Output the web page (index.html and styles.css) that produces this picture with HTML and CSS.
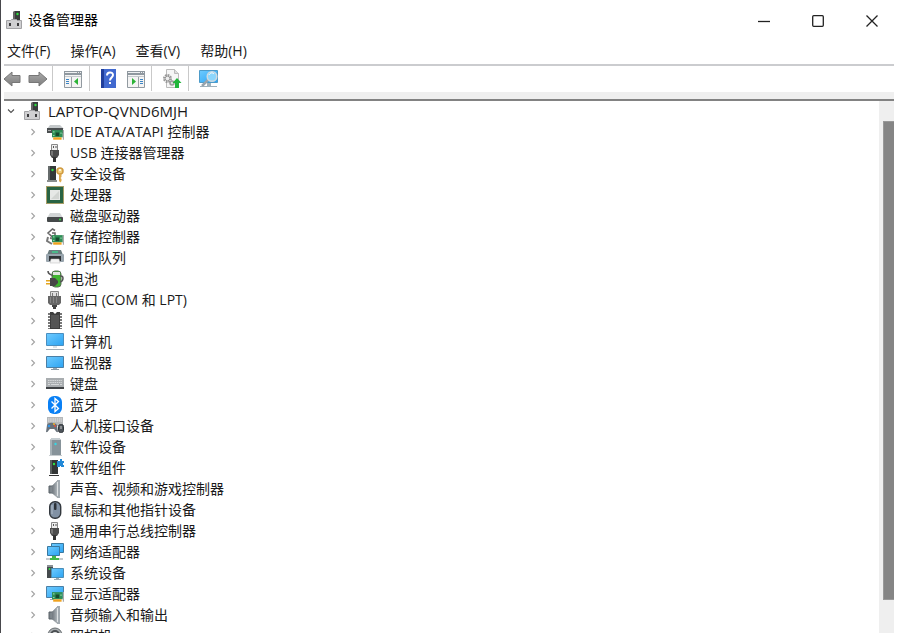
FILE: index.html
```html
<!DOCTYPE html>
<html lang="zh-CN">

<head>
  <meta charset="UTF-8">
  <meta name="viewport" content="width=device-width, initial-scale=1.0">
  <title>设备管理器</title>
  <link rel="stylesheet" href="styles.css">
</head>

<body>

  <!-- Shared icons -->
  <svg class="sprite" aria-hidden="true">
    <defs>
      <linearGradient id="screen" x1="0" y1="0" x2="1" y2="1">
        <stop offset="0" stop-color="#6fcbff" />
        <stop offset="1" stop-color="#2ba3f2" />
      </linearGradient>
      <linearGradient id="metal" x1="0" y1="0" x2="1" y2="0">
        <stop offset="0" stop-color="#6d747a" />
        <stop offset="1" stop-color="#b9c0c5" />
      </linearGradient>
      <linearGradient id="arrow" x1="0" y1="0" x2="0" y2="1">
        <stop offset="0" stop-color="#aaa" />
        <stop offset="1" stop-color="#7d7d7d" />
      </linearGradient>
    </defs>
    <symbol id="computer-box" viewBox="0 0 18 18">
      <path d="M7 1l2-1h5v10H7z" fill="#3a3d3c" />
      <path d="M7 1l2-1v10H7z" fill="#666" />
      <circle cx="11.500" cy="3" r="1.200" fill="#2ddf3e" />
      <path d="M.5 9.500h4l1-1h5l1 1h4v8H.5z" fill="#d0d0d2" stroke="#a2a2a5" />
      <path d="M3 12h2v3H3zM11 12h2v3h-2z" fill="#3b3b3d" />
    </symbol>
    <symbol id="usb" viewBox="0 0 18 18">
      <path d="M5.500.5h6v6h-6z" fill="#eee" stroke="#888" />
      <path d="M7 2h1v2H7zM9.500 2h1v2h-1z" fill="#555" />
      <path d="M4 6h9v5l-2 3H6l-2-3z" fill="#4c4c4c" />
      <path d="M5 7h2v5l-2-1z" fill="#777" />
      <path d="M7 13h3v5H7z" fill="#333" />
    </symbol>
    <symbol id="speaker" viewBox="0 0 18 18">
      <path d="M3 6h4v7H3z" fill="#7d858b" stroke="#596066" />
      <path d="M6 6l6-6v18l-6-5z" fill="url(#metal)" stroke="#878f95" stroke-width=".5" />
      <path d="M12 0h2v18h-2z" fill="#a3abb1" />
      <path d="M11 2h1v14h-1z" fill="#dfe3e5" />
    </symbol>
    <symbol id="monitor" viewBox="0 0 18 18">
      <path d="M.5 2.500h17v11H.5z" fill="url(#screen)" stroke="#4a7fa5" />
      <path d="M7 14h4v2H7z" fill="#9ba9b4" />
      <path d="M5 15h8v1H5z" fill="#8b99a4" />
    </symbol>
    <symbol id="card" viewBox="0 0 10 9">
      <path d="M0 0h9v6H0z" fill="#2f8f57" />
      <path d="M3 2h3v3H3z" fill="#174b2f" />
      <path d="M1 1h1v1H1zM7 2h1v1H7zM1 4h1v1H1z" fill="#a5dfb7" />
      <path d="M1 6h7v2H1z" fill="#f0a21e" />
      <path d="M9 0h1v8H9z" fill="#aaa" />
    </symbol>
    <symbol id="chevron" viewBox="0 0 8 8">
      <path d="M2.500 1l3 3-3 3" fill="none" stroke="#a2a2a2" stroke-width="1.100" />
    </symbol>
  </svg>

  <div class="window">

    <!-- Title bar -->
    <header class="title-bar">
      <svg class="icon"><use href="#computer-box" /></svg>
      <h1>设备管理器</h1>
      <div class="window-buttons">
        <button type="button" aria-label="最小化"><svg viewBox="0 0 12 12"><path d="M0 6.500h12" /></svg></button>
        <button type="button" aria-label="最大化"><svg viewBox="0 0 12 12"><rect x=".7" y=".7" width="10.600" height="10.600" rx="1" /></svg></button>
        <button type="button" aria-label="关闭"><svg viewBox="0 0 12 12"><path d="M.5.5l11 11M11.500.5l-11 11" /></svg></button>
      </div>
    </header>

    <!-- Menu -->
    <nav class="menu">
      <button type="button">文件(F)</button>
      <button type="button">操作(A)</button>
      <button type="button">查看(V)</button>
      <button type="button">帮助(H)</button>
    </nav>

    <!-- Toolbar -->
    <div class="toolbar">
      <div class="group">
        <button type="button" aria-label="后退"><svg viewBox="0 0 20 20"><path d="M0 10l8-7v3.500h8v7H8V17z" fill="url(#arrow)" stroke="#777" /></svg></button>
        <button type="button" aria-label="前进"><svg viewBox="0 0 20 20"><path d="M19 10l-8-7v3.500H1v7h10V17z" fill="url(#arrow)" stroke="#777" /></svg></button>
      </div>
      <div class="group">
        <button type="button" aria-label="显示控制台树">
          <svg viewBox="0 0 20 20">
            <path d="M1.500 2.500h17v16h-17z" fill="#f4f4f4" stroke="#929aa0" />
            <path d="M1 2h18v4H1z" fill="#8f989f" />
            <path d="M2 3h12v1H2zM15 3h1v1h-1zM17 3h1v1h-1z" fill="#eef0f1" />
            <path d="M2 7h16v1H2z" fill="#c5cacd" />
            <path d="M8 8h1v10H8z" fill="#9aa1a6" />
            <path d="M3 10h3v1H3zM3 12h3v1H3zM3 14h3v1H3z" fill="#3b85c5" />
            <path d="M15 9v7l-4-3.500z" fill="#2bb336" />
          </svg>
        </button>
      </div>
      <div class="group">
        <button type="button" aria-label="帮助">
          <svg viewBox="0 0 20 20">
            <path d="M1 0h15v19H1z" fill="#4169cf" />
            <path d="M1 0h3v19H1z" fill="#203e9b" />
            <path d="M7 6.500c0-4 6-4 6-.5 0 2.500-3 2.500-3 5.500" fill="none" stroke="#fff" stroke-width="2" />
            <path d="M9 13h2v2H9z" fill="#fff" />
          </svg>
        </button>
        <button type="button" aria-label="属性">
          <svg viewBox="0 0 20 20">
            <path d="M2.500 2.500h17v16h-17z" fill="#f4f4f4" stroke="#929aa0" />
            <path d="M2 2h18v4H2z" fill="#8f989f" />
            <path d="M3 3h12v1H3zM16 3h1v1h-1zM18 3h1v1h-1z" fill="#eef0f1" />
            <path d="M3 7h16v1H3z" fill="#c5cacd" />
            <path d="M13 8h1v10h-1z" fill="#9aa1a6" />
            <path d="M15 10h3v1h-3zM15 12h3v1h-3zM15 14h3v1h-3z" fill="#3b85c5" />
            <path d="M7 9v7l4-3.500z" fill="#2bb336" />
          </svg>
        </button>
      </div>
      <div class="group">
        <button type="button" aria-label="更新驱动程序">
          <svg viewBox="0 0 20 20">
            <path d="M4.500.5h8l4 4v14h-12z" fill="#f6f6f6" stroke="#bbb" />
            <path d="M12.500.5v4h4" fill="#ddd" stroke="#bbb" />
            <circle cx="5.500" cy="9.500" r="3.500" fill="none" stroke="#999" stroke-width="2" stroke-dasharray="1.800 .9" />
            <circle cx="5.500" cy="9.500" r="2.300" fill="#eee" stroke="#999" />
            <circle cx="10" cy="14" r="2" fill="#ddd" stroke="#999" stroke-width="1.500" />
            <path d="M15 9l4.500 5H17v5h-4v-5h-2.500z" fill="#22b53b" />
          </svg>
        </button>
      </div>
      <div class="group">
        <button type="button" aria-label="扫描检测硬件改动">
          <svg viewBox="0 0 20 20">
            <path d="M.5 1.500h18v12H.5z" fill="url(#screen)" stroke="#4d9bc9" />
            <path d="M8 14h4v3H8zM1 17h17v1H1z" fill="#9fb1bc" />
            <path d="M9.500 10.500L3 17" stroke="#98a4ad" stroke-width="2.500" />
            <circle cx="13" cy="7.500" r="4.800" fill="#8cd6fc" stroke="#cfdae1" stroke-width="1.500" />
            <path d="M10 6c1-2 3-3 5-1" fill="none" stroke="#fff" />
          </svg>
        </button>
      </div>
    </div>

    <!-- Device tree -->
    <main class="content">
      <ul class="tree">
        <li>
          <div class="row root">
            <button type="button" class="expander open" aria-label="折叠"><svg><use href="#chevron" /></svg></button>
            <svg class="icon"><use href="#computer-box" /></svg>
            <span>LAPTOP-QVND6MJH</span>
          </div>
          <ul class="devices">
            <li class="row">
              <button type="button" class="expander" aria-label="展开"><svg><use href="#chevron" /></svg></button>
              <svg class="icon" viewBox="0 0 18 18">
                <path d="M4 2h10l4 4H1z" fill="#c4c8ca" />
                <path d="M1 5h16v5H1z" fill="#4a4e50" />
                <path d="M2 7h3v1H2z" fill="#aaa" />
                <use href="#card" x="6" y="7" width="12" height="11" />
              </svg>
              <span>IDE ATA/ATAPI 控制器</span>
            </li>
            <li class="row">
              <button type="button" class="expander" aria-label="展开"><svg><use href="#chevron" /></svg></button>
              <svg class="icon"><use href="#usb" /></svg>
              <span>USB 连接器管理器</span>
            </li>
            <li class="row">
              <button type="button" class="expander" aria-label="展开"><svg><use href="#chevron" /></svg></button>
              <svg class="icon" viewBox="0 0 18 18">
                <path d="M2 1h8v14H2z" fill="#353838" />
                <path d="M2 1h2v14H2z" fill="#666b6b" />
                <path d="M1 15h10v2H1z" fill="#8a8e8e" />
                <circle cx="6.500" cy="5" r="1.200" fill="#2fe043" />
                <circle cx="14" cy="6" r="3" fill="#f3cf79" stroke="#d09b42" stroke-width="1.500" />
                <circle cx="14" cy="5" r="1" fill="#fff" />
                <path d="M13 9h2.500v3l-1 1 1 1v2l-1.200 1.500L13 16z" fill="#dfa94c" />
              </svg>
              <span>安全设备</span>
            </li>
            <li class="row">
              <button type="button" class="expander" aria-label="展开"><svg><use href="#chevron" /></svg></button>
              <svg class="icon" viewBox="0 0 18 18">
                <path d="M0 0h18v18H0z" fill="#a59d66" />
                <path d="M1 1h16v16H1z" fill="#286343" />
                <path d="M4 4h10v10H4z" fill="#e6e8e6" />
                <path d="M5 13l8-8v8z" fill="#d2d5d2" />
              </svg>
              <span>处理器</span>
            </li>
            <li class="row">
              <button type="button" class="expander" aria-label="展开"><svg><use href="#chevron" /></svg></button>
              <svg class="icon" viewBox="0 0 18 18">
                <path d="M4 6h10l3 5H1z" fill="#d2d5d6" />
                <rect x="1" y="10" width="16" height="5" rx="1" fill="#45494a" />
                <circle cx="14" cy="12.500" r="1" fill="#2fe043" />
              </svg>
              <span>磁盘驱动器</span>
            </li>
            <li class="row">
              <button type="button" class="expander" aria-label="展开"><svg><use href="#chevron" /></svg></button>
              <svg class="icon" viewBox="0 0 18 18">
                <path d="M9 2.500L6.500 1 2 5l4.500 4L9 7.500V5H6" fill="none" stroke="#666" stroke-width="1.500" />
                <path d="M2 9l-1 4 5 3M4 10l5 1" fill="none" stroke="#777" stroke-width="2" />
                <use href="#card" x="6" y="7" width="12" height="11" />
              </svg>
              <span>存储控制器</span>
            </li>
            <li class="row">
              <button type="button" class="expander" aria-label="展开"><svg><use href="#chevron" /></svg></button>
              <svg class="icon" viewBox="0 0 18 18">
                <path d="M3 1h12l2 5H1z" fill="#6c7d80" />
                <path d="M6 2h6v2H6z" fill="#49b98a" />
                <rect y="5" width="18" height="8" rx="1" fill="#98a4ad" />
                <path d="M3 7h12v5H3z" fill="#2f3337" />
                <path d="M5 10h8l1 4H4z" fill="#f4f4f4" stroke="#bbb" stroke-width=".5" />
              </svg>
              <span>打印队列</span>
            </li>
            <li class="row">
              <button type="button" class="expander" aria-label="展开"><svg><use href="#chevron" /></svg></button>
              <svg class="icon" viewBox="0 0 18 18">
                <rect x="6" y="1" width="9" height="16" rx="3" fill="#3fb62f" stroke="#5b7158" />
                <path d="M7 2h7v3H7z" fill="#dfe6dd" />
                <path d="M2 1c0 4 3 3 5 5M14 6c4-1 4 5 0 6" fill="none" stroke="#555" stroke-width="1.500" />
                <path d="M0 10h5v1.500H0zM0 13h5v1.500H0z" fill="#e4a51f" />
                <path d="M4 8h5l3 3v2l-3 3H4z" fill="#464646" />
              </svg>
              <span>电池</span>
            </li>
            <li class="row">
              <button type="button" class="expander" aria-label="展开"><svg><use href="#chevron" /></svg></button>
              <svg class="icon" viewBox="0 0 18 18">
                <path d="M4.500.5h8v5h-8z" fill="#ddd" stroke="#888" />
                <path d="M6 2h1v3H6zM10 2h1v3h-1z" fill="#777" />
                <path d="M2 5h13v7l-2 2H4l-2-2z" fill="#666" />
                <path d="M4 6h1v6H4zM7 6h1v6H7zM10 6h1v6h-1z" fill="#858585" />
                <path d="M6 14h5v2H6zM7 16h3v2H7z" fill="#444" />
              </svg>
              <span>端口 (COM 和 LPT)</span>
            </li>
            <li class="row">
              <button type="button" class="expander" aria-label="展开"><svg><use href="#chevron" /></svg></button>
              <svg class="icon" viewBox="0 0 18 18">
                <path d="M3 1v16M15 1v16" stroke="#777" stroke-width="2" stroke-dasharray="2 1" />
                <path d="M4 0h3l2 2 2-2h3v17H4z" fill="#3e3e3e" />
                <path d="M5 3h8v13H5z" fill="#555" />
              </svg>
              <span>固件</span>
            </li>
            <li class="row">
              <button type="button" class="expander" aria-label="展开"><svg><use href="#chevron" /></svg></button>
              <svg class="icon" viewBox="0 0 18 18">
                <path d="M.5.5h17v12H.5z" fill="url(#screen)" stroke="#4a8fc0" />
                <path d="M0 16h18v1H0z" fill="#9fadb7" />
                <path d="M7 13h4v2H7z" fill="#dce3e7" />
              </svg>
              <span>计算机</span>
            </li>
            <li class="row">
              <button type="button" class="expander" aria-label="展开"><svg><use href="#chevron" /></svg></button>
              <svg class="icon"><use href="#monitor" /></svg>
              <span>监视器</span>
            </li>
            <li class="row">
              <button type="button" class="expander" aria-label="展开"><svg><use href="#chevron" /></svg></button>
              <svg class="icon" viewBox="0 0 18 18">
                <path d="M0 3h18v9H0z" fill="#a9adb0" />
                <path d="M2 5.500h14M2 7.500h14" stroke="#d5d8da" stroke-dasharray="1.500 .7" />
                <path d="M2 9.500h2M5 9.500h8M14 9.500h2" stroke="#d5d8da" />
                <path d="M0 12h18v2H0z" fill="#404346" />
              </svg>
              <span>键盘</span>
            </li>
            <li class="row">
              <button type="button" class="expander" aria-label="展开"><svg><use href="#chevron" /></svg></button>
              <svg class="icon" viewBox="0 0 18 18">
                <rect x="2" width="14" height="18" rx="6" fill="#0a80f5" />
                <path d="M5.500 5.500l7 7L9 15.500v-13l3.500 3-7 7" fill="none" stroke="#fff" stroke-width="1.300" />
              </svg>
              <span>蓝牙</span>
            </li>
            <li class="row">
              <button type="button" class="expander" aria-label="展开"><svg><use href="#chevron" /></svg></button>
              <svg class="icon" viewBox="0 0 18 18">
                <path d="M1 0h16v9H1z" fill="#b5b8ba" />
                <path d="M2 2h14M2 4h14" stroke="#e8e8e8" stroke-dasharray="1.500 .7" />
                <path d="M1 8c1-3 8-3 10 0l1 7c-2 1-3-3-4-3H4c-1 0-2 4-4 3z" fill="#68717a" />
                <circle cx="3" cy="9" r="1.300" fill="#3494e6" />
                <circle cx="8" cy="7" r="1" fill="#f0b32f" />
                <circle cx="9" cy="9" r="1" fill="#e44c3d" />
                <rect x="12.500" y="7.500" width="5" height="8" rx="2" fill="#4c5359" stroke="#30363b" />
                <path d="M15 9v3" stroke="#ccc" />
              </svg>
              <span>人机接口设备</span>
            </li>
            <li class="row">
              <button type="button" class="expander" aria-label="展开"><svg><use href="#chevron" /></svg></button>
              <svg class="icon" viewBox="0 0 18 18">
                <path d="M4 2l2-2h7l2 2v15H4z" fill="#87939a" />
                <path d="M4 2h11l-2-2H6z" fill="#c5cdd1" />
                <path d="M4 2h2v15H4z" fill="#a7b1b6" />
                <circle cx="9.500" cy="6" r="1.200" fill="#35d8e5" />
                <path d="M3 17h13v1H3z" fill="#c8cdd0" />
              </svg>
              <span>软件设备</span>
            </li>
            <li class="row">
              <button type="button" class="expander" aria-label="展开"><svg><use href="#chevron" /></svg></button>
              <svg class="icon" viewBox="0 0 18 18">
                <path d="M4 1h8v14H4z" fill="#333636" />
                <path d="M4 1h2v14H4z" fill="#5b6060" />
                <path d="M3 16h10v1H3z" fill="#333" />
                <circle cx="8" cy="5" r="1.200" fill="#2fe043" />
                <path d="M11 2h3V0h2v2h2v2h-1v2h1v2h-3V7h-1v1h-3z" fill="#2389d7" />
              </svg>
              <span>软件组件</span>
            </li>
            <li class="row">
              <button type="button" class="expander" aria-label="展开"><svg><use href="#chevron" /></svg></button>
              <svg class="icon"><use href="#speaker" /></svg>
              <span>声音、视频和游戏控制器</span>
            </li>
            <li class="row">
              <button type="button" class="expander" aria-label="展开"><svg><use href="#chevron" /></svg></button>
              <svg class="icon" viewBox="0 0 18 18">
                <rect x="3.700" y=".7" width="11" height="16.600" rx="5" fill="#8191a4" stroke="#33383e" stroke-width="1.400" />
                <path d="M6 4v9" stroke="#b1bdc9" />
                <rect x="8" y="2" width="2.500" height="7" rx="1" fill="#2d3238" />
              </svg>
              <span>鼠标和其他指针设备</span>
            </li>
            <li class="row">
              <button type="button" class="expander" aria-label="展开"><svg><use href="#chevron" /></svg></button>
              <svg class="icon"><use href="#usb" /></svg>
              <span>通用串行总线控制器</span>
            </li>
            <li class="row">
              <button type="button" class="expander" aria-label="展开"><svg><use href="#chevron" /></svg></button>
              <svg class="icon" viewBox="0 0 18 18">
                <path d="M5.500.5h12v9h-12z" fill="url(#screen)" stroke="#39789f" />
                <path d="M1.500 3.500h12v9h-12z" fill="url(#screen)" stroke="#39789f" />
                <path d="M6 13h4v2h3v2H4v-2h2z" fill="#43b84a" />
                <path d="M0 15h4v2H0zM13 15h4v2h-4z" fill="#c6cbce" />
              </svg>
              <span>网络适配器</span>
            </li>
            <li class="row">
              <button type="button" class="expander" aria-label="展开"><svg><use href="#chevron" /></svg></button>
              <svg class="icon" viewBox="0 0 18 18">
                <path d="M1 1h6v13H1z" fill="#454a4d" />
                <path d="M1 1h6v2H1z" fill="#8c9295" />
                <circle cx="3.500" cy="5" r="1" fill="#2fe043" />
                <path d="M5.500 4.500h12v9h-12z" fill="url(#screen)" stroke="#4b8eb7" />
                <path d="M10 14h3v1h2v1H8v-1h2z" fill="#9ba8b1" />
              </svg>
              <span>系统设备</span>
            </li>
            <li class="row">
              <button type="button" class="expander" aria-label="展开"><svg><use href="#chevron" /></svg></button>
              <svg class="icon" viewBox="0 0 18 18">
                <path d="M.5 1.500h17v11H.5z" fill="url(#screen)" stroke="#4a7fa5" />
                <path d="M4 14h4v1H4z" fill="#9ba9b4" />
                <use href="#card" x="6" y="7" width="12" height="11" />
              </svg>
              <span>显示适配器</span>
            </li>
            <li class="row">
              <button type="button" class="expander" aria-label="展开"><svg><use href="#chevron" /></svg></button>
              <svg class="icon"><use href="#speaker" /></svg>
              <span>音频输入和输出</span>
            </li>
            <li class="row">
              <button type="button" class="expander" aria-label="展开"><svg><use href="#chevron" /></svg></button>
              <svg class="icon" viewBox="0 0 18 18">
                <circle cx="9" cy="8" r="7" fill="#a8adb0" stroke="#6a6f72" />
                <circle cx="9" cy="8" r="4" fill="#e0e3e4" stroke="#4b4f52" stroke-width="2" />
                <circle cx="9" cy="8" r="2" fill="#333" />
                <path d="M4 16h10v2H4z" fill="#777" />
              </svg>
              <span>照相机</span>
            </li>
          </ul>
        </li>
      </ul>
      <div class="scrollbar">
        <div class="thumb"></div>
      </div>
    </main>

  </div>

</body>

</html>
```

FILE: styles.css
```css
* {
  box-sizing: border-box;
}

body {
  margin: 0;
  background-color: #fff;
  color: #1a1a1a;
  font-family: 'Open Sans', 'Noto Sans CJK SC', sans-serif;
  font-size: 14px;
  line-height: 20px;
}

button {
  display: flex;
  align-items: center;
  justify-content: center;
  padding: 0;
  border: none;
  background: none;
  color: inherit;
  font: inherit;
}

ul {
  list-style: none;
  margin: 0;
  padding: 0;
}

.sprite {
  position: absolute;
  width: 0;
  height: 0;
}

.window {
  display: flex;
  flex-direction: column;
  height: 100vh;
  padding-left: 3px;
  border-left: 1px solid #48484c;
  overflow: hidden;
}

.icon {
  flex: none;
  width: 18px;
  height: 18px;
}

/* Title bar */
.title-bar {
  display: flex;
  flex: none;
  align-items: center;
  height: 40px;
  padding-left: 2px;
  margin-right: 4px;
}

.title-bar h1 {
  margin: 0 0 0 4px;
  color: #000;
  font-size: 14px;
  font-weight: 400;
}

.window-buttons {
  display: flex;
  margin-left: auto;
}

.window-buttons button {
  width: 54px;
  height: 40px;
  padding-top: 2px;
}

.window-buttons svg {
  width: 12px;
  height: 12px;
  fill: none;
  stroke: #222;
  stroke-width: 1.3;
}

/* Menu */
.menu {
  display: flex;
  flex: none;
  gap: 20px;
  height: 24px;
  padding: 0 3px 2px;
}

/* Toolbar */
.toolbar {
  display: flex;
  flex: none;
  height: 37px;
  margin-right: 9px;
  padding-bottom: 8px;
  border-top: 2px solid #cbcccf;
  border-bottom: 2px solid #828282;
  background: linear-gradient(to top, #efefef 7px, #fff 7px);
}

.toolbar .group {
  display: flex;
  align-items: center;
  gap: 5px;
  padding: 0 6px 0 10px;
  border-right: 1px solid #c9c9c9;
}

.toolbar .group:first-child {
  gap: 4px;
  padding: 0 4px 0 0;
}

.toolbar .group:last-child {
  border-right: none;
}

.toolbar svg {
  width: 20px;
  height: 20px;
}

/* Device tree */
.content {
  display: flex;
  flex: 1;
  min-height: 0;
  margin-right: 9px;
}

.tree {
  flex: 1;
  overflow: hidden;
}

.row {
  display: flex;
  align-items: center;
  height: 21px;
  white-space: nowrap;
}

.row .icon {
  margin: 0 6px 0 7px;
}

.row.root {
  height: 20px;
  font-size: 15px;
}

.devices {
  padding-left: 22px;
}

.expander {
  width: 13px;
  height: 20px;
}

.expander svg {
  width: 8px;
  height: 8px;
}

.expander.open svg {
  transform: rotate(90deg);
}

.expander.open use {
  filter: brightness(0.5);
}

.scrollbar {
  width: 15px;
  padding: 20px 0 33px 4px;
  background-color: #efefef;
}

.thumb {
  height: 100%;
  border: 1px solid #999;
  border-right: none;
  background-color: #858585;
}
```
